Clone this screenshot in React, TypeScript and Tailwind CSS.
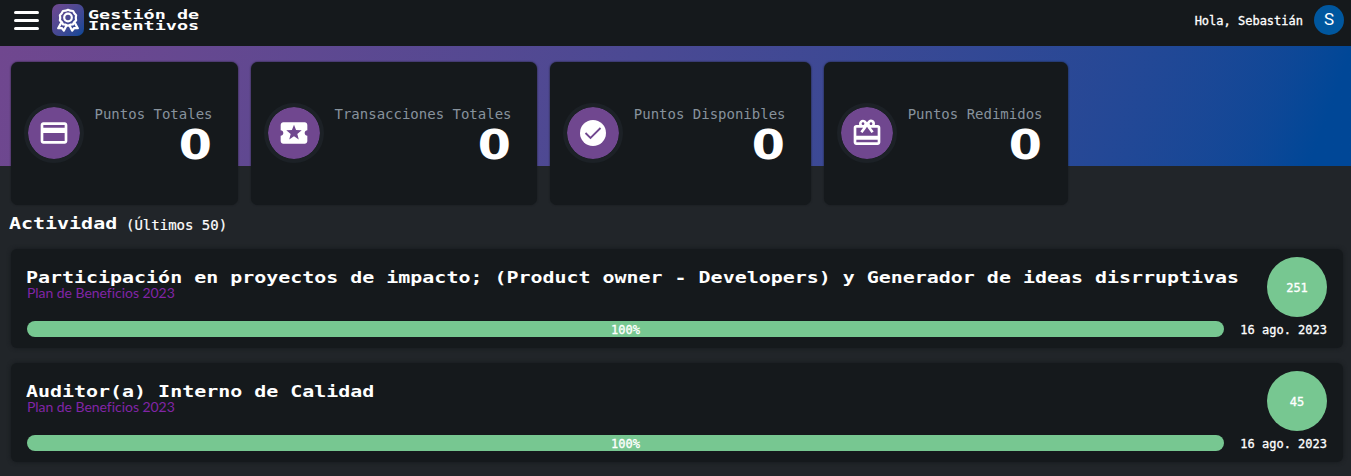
import { MdCreditCard, MdLocalActivity, MdRedeem } from "react-icons/md";
import type { ComponentType } from "react";

function AwardIcon({ className }: { className?: string }) {
  return (
    <svg viewBox="0 0 24 24" className={className} fill="none" stroke="currentColor" strokeWidth="2.2" strokeLinejoin="round">
      <path d="M12 1.8l2.4.9 2.7.3 1.2 2.3 1.8 1.9-.3 2.6.3 2.6-1.9 1.7-1.3 2.3-2.6.3-2.3 1-2.3-1-2.6-.3-1.3-2.3-1.9-1.7.3-2.6-.3-2.6 1.8-1.9L6.900 3l2.700-.3z" />
      <circle cx="12" cy="9.500" r="3.800" />
      <path d="M5.300 14.600L2.200 20.200l3.600-.2 2 2.700 2.800-5.500M18.700 14.600l3.100 5.600-3.600-.2-2 2.700-2.800-5.500" />
    </svg>
  );
}

function CheckDiscIcon({ className }: { className?: string }) {
  return (
    <svg viewBox="0 0 32 32" className={className} fill="none">
      <circle cx="16" cy="16" r="13" fill="currentColor" />
      <path d="M8.500 16l5 5L23.500 11" stroke="#70478f" strokeWidth="1.800" />
    </svg>
  );
}

const stats: { label: string; icon: ComponentType<{ className?: string }>; width: string }[] = [
  { label: "Puntos Totales", icon: MdCreditCard, width: "w-[227px]" },
  { label: "Transacciones Totales", icon: MdLocalActivity, width: "w-[286px]" },
  { label: "Puntos Disponibles", icon: CheckDiscIcon, width: "w-[261px]" },
  { label: "Puntos Redimidos", icon: MdRedeem, width: "w-[244px]" },
];

const activities = [
  {
    title: "Participación en proyectos de impacto; (Product owner - Developers) y Generador de ideas disrruptivas",
    points: 251,
  },
  { title: "Auditor(a) Interno de Calidad", points: 45 },
];

function Header() {
  return (
    <header className="flex h-[46px] items-center bg-[#15191c] pr-[7px] pl-[14px]">
      <button aria-label="Menú" className="mb-[6px] flex w-[25px] flex-col gap-[5px]">
        <span className="h-[3px] w-full rounded-full bg-white" />
        <span className="h-[3px] w-full rounded-full bg-white" />
        <span className="h-[3px] w-full rounded-full bg-white" />
      </button>
      <div className="mb-[6px] ml-[13px] flex size-8 items-center justify-center rounded-[7px] bg-linear-135 from-[#70478f] to-[#004797]">
        <AwardIcon className="size-6 text-white" />
      </div>
      <h1 className="mb-[7px] ml-[4px] w-[112px] text-[13px] leading-[11px] font-bold text-white">
        <span className="block w-[79px] origin-left scale-x-[1.42] whitespace-nowrap">Gestión de</span>
        <span className="block w-[79px] origin-left scale-x-[1.42] whitespace-nowrap">Incentivos</span>
      </h1>
      <span className="mb-[4px] ml-auto text-[12px] text-white [-webkit-text-stroke:0.3px_white]">Hola, Sebastián</span>
      <span className="mb-[6px] ml-[11px] flex size-[30px] items-center justify-center rounded-full bg-[#00579f] font-['Roboto',sans-serif] text-[17px] text-white">
        S
      </span>
    </header>
  );
}

function StatCard({ label, icon: Icon, width }: (typeof stats)[number]) {
  return (
    <section
      className={`flex h-[143px] shrink-0 items-center rounded-[7px] bg-[#15191c] pr-[25px] pl-[13px] shadow-[0_0_2px_#15191c] ${width}`}
    >
      <div className="flex size-[60px] shrink-0 items-center justify-center rounded-full border-4 border-[#1c2126] bg-[#70478f] bg-clip-padding">
        <Icon className="size-[32px] text-white" />
      </div>
      <div className="mt-[3px] ml-[11px] flex flex-1 flex-col items-end">
        <span className="text-[14px] leading-[20px] whitespace-nowrap text-[#87929c]">{label}</span>
        <span className="mt-px mr-px origin-right scale-x-[1.19] font-['DejaVu_Sans',sans-serif] text-[40px] leading-[40px] font-bold text-white">
          0
        </span>
      </div>
    </section>
  );
}

function ActivityCard({ title, points }: (typeof activities)[number]) {
  return (
    <article className="flex h-[99px] gap-4 rounded-[6px] bg-[#15191c] px-4 pt-2 shadow-[0_0_4px_#15191c]">
      <div className="min-w-0 flex-1">
        <h3 className="mt-[12px] ml-[-1px] h-[17px] origin-left scale-x-[1.33] text-[15px] leading-[18px] font-bold whitespace-nowrap text-white">
          {title}
        </h3>
        <p className="h-[16px] font-['Lato',sans-serif] text-[14px] leading-[14px] tracking-[-0.04px] whitespace-nowrap text-[#8125a6]">
          Plan de Beneficios 2023
        </p>
        <div className="mt-[19px] flex h-4 items-center justify-center rounded-full bg-[#77c791] pt-[2px] text-[12px] text-white [-webkit-text-stroke:0.3px_white]">
          100%
        </div>
      </div>
      <div className="flex w-[87px] shrink-0 flex-col items-end">
        <span className="flex size-[60px] items-center justify-center rounded-full bg-[#77c791] pt-[2px] text-[12px] text-white [-webkit-text-stroke:0.3px_white]">
          {points}
        </span>
        <time className="mt-[5px] text-[12px] leading-[16px] whitespace-nowrap text-white [-webkit-text-stroke:0.3px_white]">
          16 ago. 2023
        </time>
      </div>
    </article>
  );
}

export default function App() {
  return (
    <div className="h-[476px] w-full overflow-hidden bg-[#212529] font-['DejaVu_Sans_Mono',monospace]">
      <Header />
      <main>
        <div className="h-[120px] bg-linear-110 from-[#70478f] to-[#004797] to-97% pt-[15.5px]">
          <div className="flex gap-[13px] pl-[10.5px]">
            {stats.map((stat) => (
              <StatCard key={stat.label} {...stat} />
            ))}
          </div>
        </div>
        <section className="pt-[48px] pr-2 pl-[11px]">
          <h2 className="flex h-[20px] items-center text-white">
            <span className="ml-[-2px] w-[117px] text-[15px] font-bold">
              <span className="block w-[82px] origin-left scale-x-[1.331]">Actividad</span>
            </span>
            <span className="pt-[2px] text-[14px] [-webkit-text-stroke:0.2px_white]">(Últimos 50)</span>
          </h2>
          <div className="mt-[15px] flex flex-col gap-[15px]">
            {activities.map((activity) => (
              <ActivityCard key={activity.title} {...activity} />
            ))}
          </div>
        </section>
      </main>
    </div>
  );
}
